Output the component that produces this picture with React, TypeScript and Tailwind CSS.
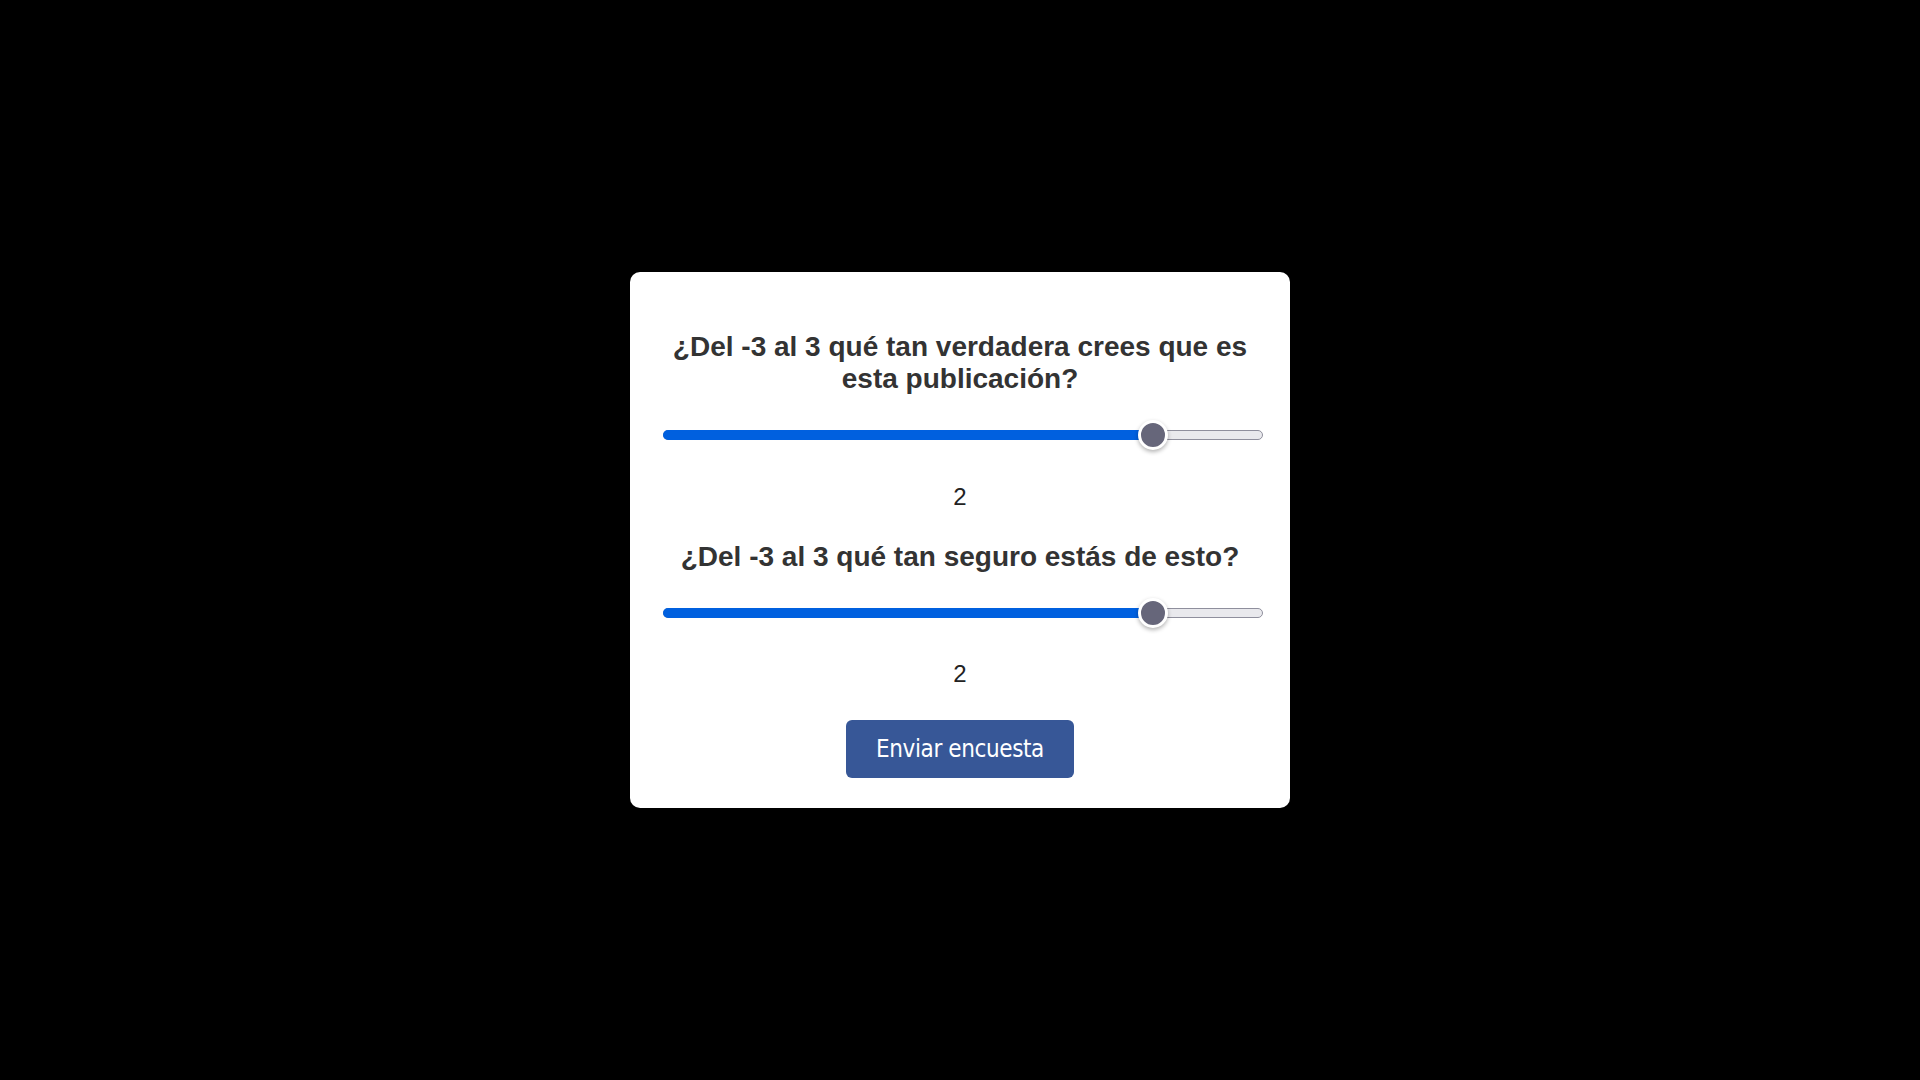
import React from "react";

function Slider() {
  return (
    <div className="mt-[25px] self-stretch pl-[3px]">
      <div className="relative flex h-[30px] w-[600px] items-center">
        <div className="relative h-[10px] w-full">
          <div className="absolute inset-0 rounded-full border border-[#8f8f9d] bg-[#e9e9ed]" />
          <div className="absolute left-0 top-0 h-full w-[490px] rounded-full bg-[#0060df]" />
        </div>
        <div className="absolute left-[475px] top-0 h-[30px] w-[30px] rounded-full border-[3px] border-white bg-[#66667a] shadow-[0_2px_4px_rgba(0,0,0,0.3)]" />
      </div>
    </div>
  );
}

export default function App() {
  return (
    <div className="flex min-h-screen w-full items-center justify-center bg-black">
      <div
        className="flex w-[660px] flex-col items-center rounded-[10px] bg-white p-[30px]"
        style={{ fontFamily: '"Liberation Sans", Arial, sans-serif' }}
      >
        <h2 className="mt-[29px] w-full text-center text-[28px] font-bold leading-[32.2px] text-[#333333]">
          ¿Del -3 al 3 qué tan verdadera crees que es esta publicación?
        </h2>
        <Slider />
        <p className="mt-[33px] text-center text-[24px] leading-[28px] text-[#222222]">2</p>
        <h2 className="mt-[30px] w-full text-center text-[28px] font-bold leading-[32.2px] text-[#333333]">
          ¿Del -3 al 3 qué tan seguro estás de esto?
        </h2>
        <Slider />
        <p className="mt-[32px] text-center text-[24px] leading-[28px] text-[#222222]">2</p>
        <button
          className="mt-[32px] flex h-[58px] w-[228px] items-center justify-center rounded-[6px] bg-[#375797] text-[24px] tracking-[-0.4px] text-white"
          style={{ fontFamily: '"DejaVu Sans Condensed", "DejaVu Sans", sans-serif' }}
        >
          Enviar encuesta
        </button>
      </div>
    </div>
  );
}
